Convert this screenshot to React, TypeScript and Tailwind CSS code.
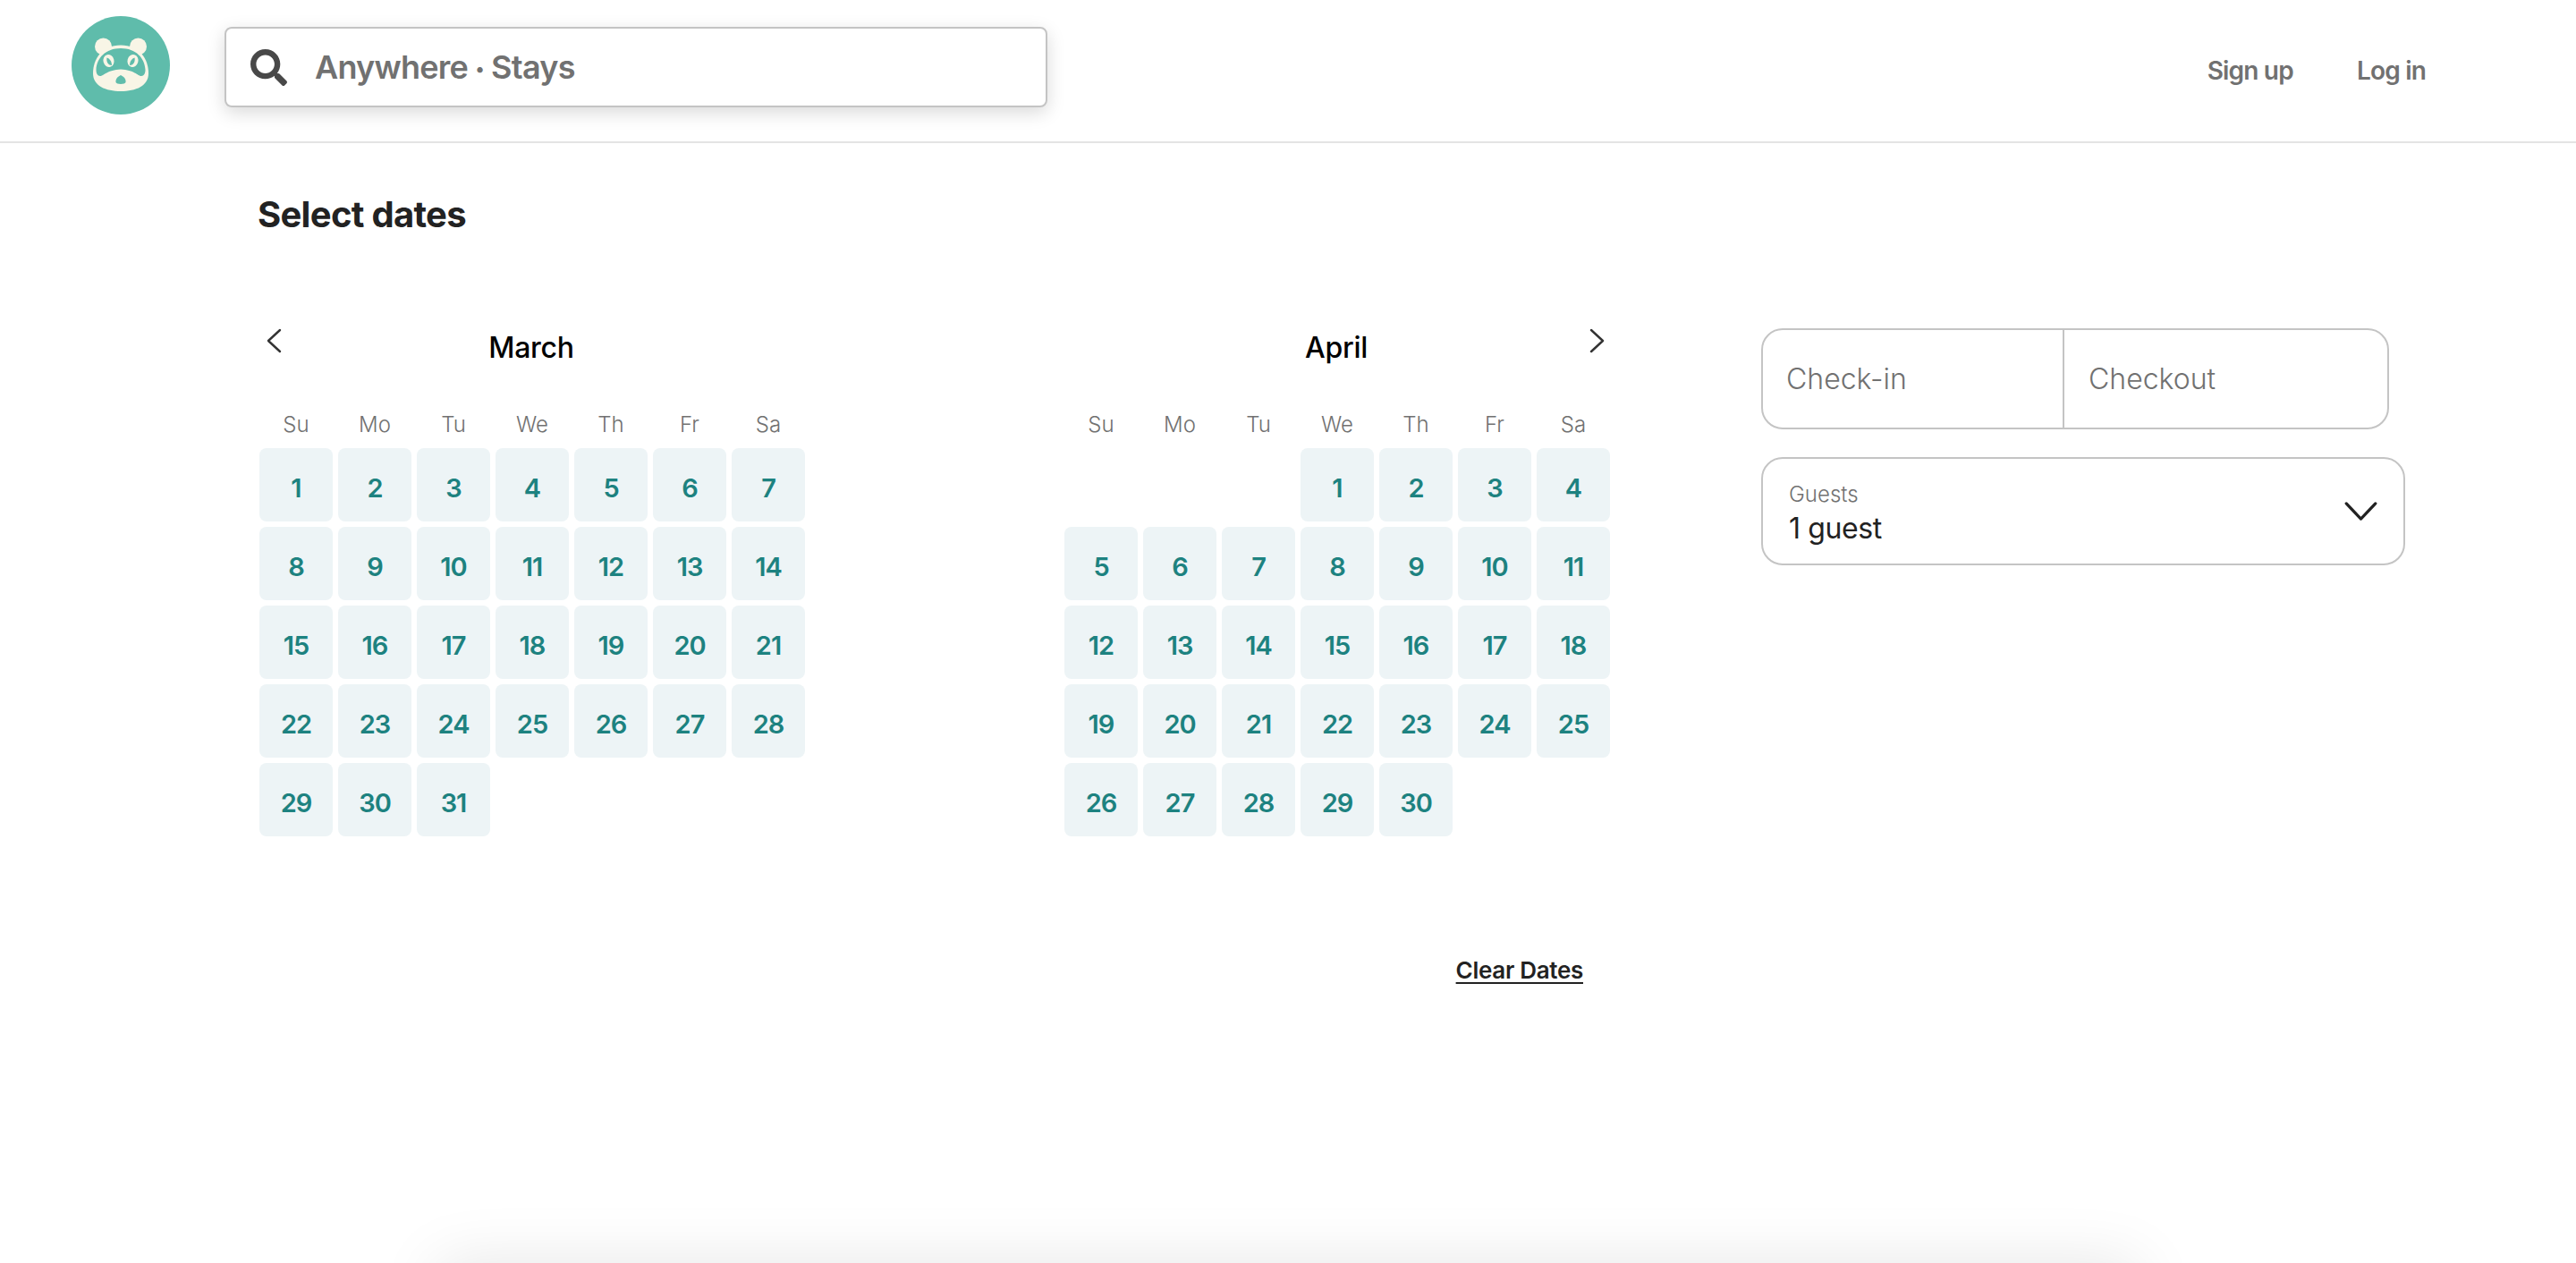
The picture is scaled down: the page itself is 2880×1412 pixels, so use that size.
import { FaSearch } from "react-icons/fa";

const font = "font-['Inter','Liberation_Sans',sans-serif]";

function Logo() {
  const cream = "#f8f5e6";
  const teal = "#5fbcab";
  return (
    <svg viewBox="0 0 110 110" className="w-[110px] h-[110px] shrink-0 mb-[12px]">
      <circle cx="55" cy="55" r="55" fill={teal} />
      <circle cx="35.5" cy="34" r="9.5" fill={cream} />
      <circle cx="74.5" cy="34" r="9.5" fill={cream} />
      <path d="M55 32.5C34 32.5 24 48 24 64C24 78 38 84 55 84C72 84 86 78 86 64C86 48 76 32.5 55 32.5z" fill={cream} />
      <path d="M55 36C38 36 28 47 27.5 60C27.5 64 29 67 32 67C36 67 40 60 55 59.5C70 60 74 67 78 67C81 67 82.5 64 82.5 60C82 47 72 36 55 36z" fill={teal} />
      <ellipse cx="41.5" cy="50" rx="6" ry="7" fill={cream} transform="rotate(-15 41.5 50)" />
      <ellipse cx="68.5" cy="50" rx="6" ry="7" fill={cream} transform="rotate(15 68.5 50)" />
      <path d="M39.5 46.5c3 1 5.5 4 5.5 8.5c-3.5 0-6.5-3.5-5.5-8.500z" fill={teal} />
      <path d="M70.5 46.5c-3 1-5.500 4-5.500 8.500c3.500 0 6.500-3.500 5.500-8.500z" fill={teal} />
      <path d="M55 66c-3.500 1.500-6 4.500-5.500 8c.5 2.500 10.500 2.500 11 0c.5-3.500-2-6.500-5.500-8z" fill={teal} />
    </svg>
  );
}

function Chevron({ dir }: { dir: "left" | "right" }) {
  return (
    <svg viewBox="0 0 18 28" className="w-[18px] h-[28px]" fill="none" stroke="#333" strokeWidth="2.4" strokeLinecap="round" strokeLinejoin="round">
      <path d={dir === "left" ? "M16 2 3 14l13 12" : "M2 2l13 12L2 26"} />
    </svg>
  );
}

const weekdays = ["Su", "Mo", "Tu", "We", "Th", "Fr", "Sa"];

function Month({ name, offset, days, arrow }: { name: string; offset: number; days: number; arrow: "left" | "right" }) {
  const blanks = Array.from({ length: offset });
  const nums = Array.from({ length: days }, (_, i) => i + 1);
  return (
    <div className="w-[610px] shrink-0">
      <div className="flex items-start h-[60px] justify-between">
        <div className="w-[40px] pl-[7px] flex">{arrow === "left" && <Chevron dir="left" />}</div>
        <div className="text-[32px] leading-[40px] mt-[2px] pr-[2px] font-medium tracking-[-0.3px] text-black">{name}</div>
        <div className="w-[40px] pr-[5px] flex justify-end">{arrow === "right" && <Chevron dir="right" />}</div>
      </div>
      <div className="grid grid-cols-[repeat(7,82px)] gap-x-[6px] mt-[34px] h-[28px]">
        {weekdays.map((d) => (
          <div key={d} className="text-center text-[24px] leading-[28px] font-light text-[#717171]">{d}</div>
        ))}
      </div>
      <div className="grid grid-cols-[repeat(7,82px)] auto-rows-[82px] gap-[6px] mt-[12px]">
        {blanks.map((_, i) => (
          <div key={`b${i}`} />
        ))}
        {nums.map((n) => (
          <div key={n} className="flex items-center justify-center pt-[7px] rounded-[8px] bg-[#edf4f6] text-[29px] tracking-[-1px] font-semibold text-[#1d8280]">
            {n}
          </div>
        ))}
      </div>
    </div>
  );
}

export default function App() {
  return (
    <div className={`h-[1412px] overflow-hidden bg-white flex flex-col ${font}`}>
      <header className="h-[160px] shrink-0 border-b-2 border-[#e4e4e4] flex items-center pl-[80px] pr-[168px]">
        <Logo />
        <div className="ml-[61px] mb-[8px] w-[920px] h-[90px] rounded-[8px] border-2 border-[#c4c4c4] bg-white shadow-[0_6px_20px_rgba(0,0,0,0.15)] flex items-center pl-[27px]">
          <FaSearch className="text-[#484848] w-[41px] h-[41px]" />
          <span className="ml-[31px] text-[36px] font-semibold tracking-[-0.75px] text-[#717171]">
            Anywhere <span className="text-[20px] align-[4px]">•</span> Stays
          </span>
        </div>
        <nav className="ml-auto flex items-center gap-[71px] text-[28px] font-semibold tracking-[-0.8px] text-[#717171]">
          <span>Sign up</span>
          <span>Log in</span>
        </nav>
      </header>
      <main className="h-[1252px] shrink-0 pl-[288px] pt-[55px]">
        <h1 className="text-[40px] leading-[50px] font-bold tracking-[-0.7px] text-[#222222]">Select dates</h1>
        <div className="flex mt-[102px]">
          <div className="pl-[2px] w-[1681px] shrink-0">
            <div className="flex gap-[290px]">
              <Month name="March" offset={0} days={31} arrow="left" />
              <Month name="April" offset={3} days={30} arrow="right" />
            </div>
            <div className="w-[1480px] flex justify-end mt-[130px]">
              <span className="text-[26px] font-semibold tracking-[-0.3px] text-[#222222] underline underline-offset-4">Clear Dates</span>
            </div>
          </div>
          <div className="w-[720px] shrink-0 flex flex-col gap-[31px] items-start">
            <div className="w-[702px] h-[113px] rounded-[24px] border-2 border-[#c4c4c4] flex text-[32px] font-light text-[#717171]">
              <div className="w-[337px] border-r-2 border-[#c4c4c4] flex items-center pl-[26px]">Check-in</div>
              <div className="flex-1 flex items-center pl-[27px]">Checkout</div>
            </div>
            <div className="w-[720px] h-[121px] rounded-[24px] border-2 border-[#c4c4c4] flex items-center justify-between pl-[29px] pr-[29px]">
              <div className="mt-[5px]">
                <div className="text-[24px] leading-[30px] font-light text-[#717171]">Guests</div>
                <div className="text-[32px] leading-[40px] mt-[3px] font-normal tracking-[-0.4px] text-[#222222]">1 guest</div>
              </div>
              <svg viewBox="0 0 38 24" className="w-[37px] h-[23px]" fill="none" stroke="#222" strokeWidth="3.4" strokeLinecap="round" strokeLinejoin="round">
                <path d="M2 3l17 18L36 3" />
              </svg>
            </div>
          </div>
        </div>
      </main>
      <div className="mx-auto w-[1900px] h-[100px] shrink-0 bg-white shadow-[0_0_70px_rgba(0,0,0,0.1)]" />
    </div>
  );
}
